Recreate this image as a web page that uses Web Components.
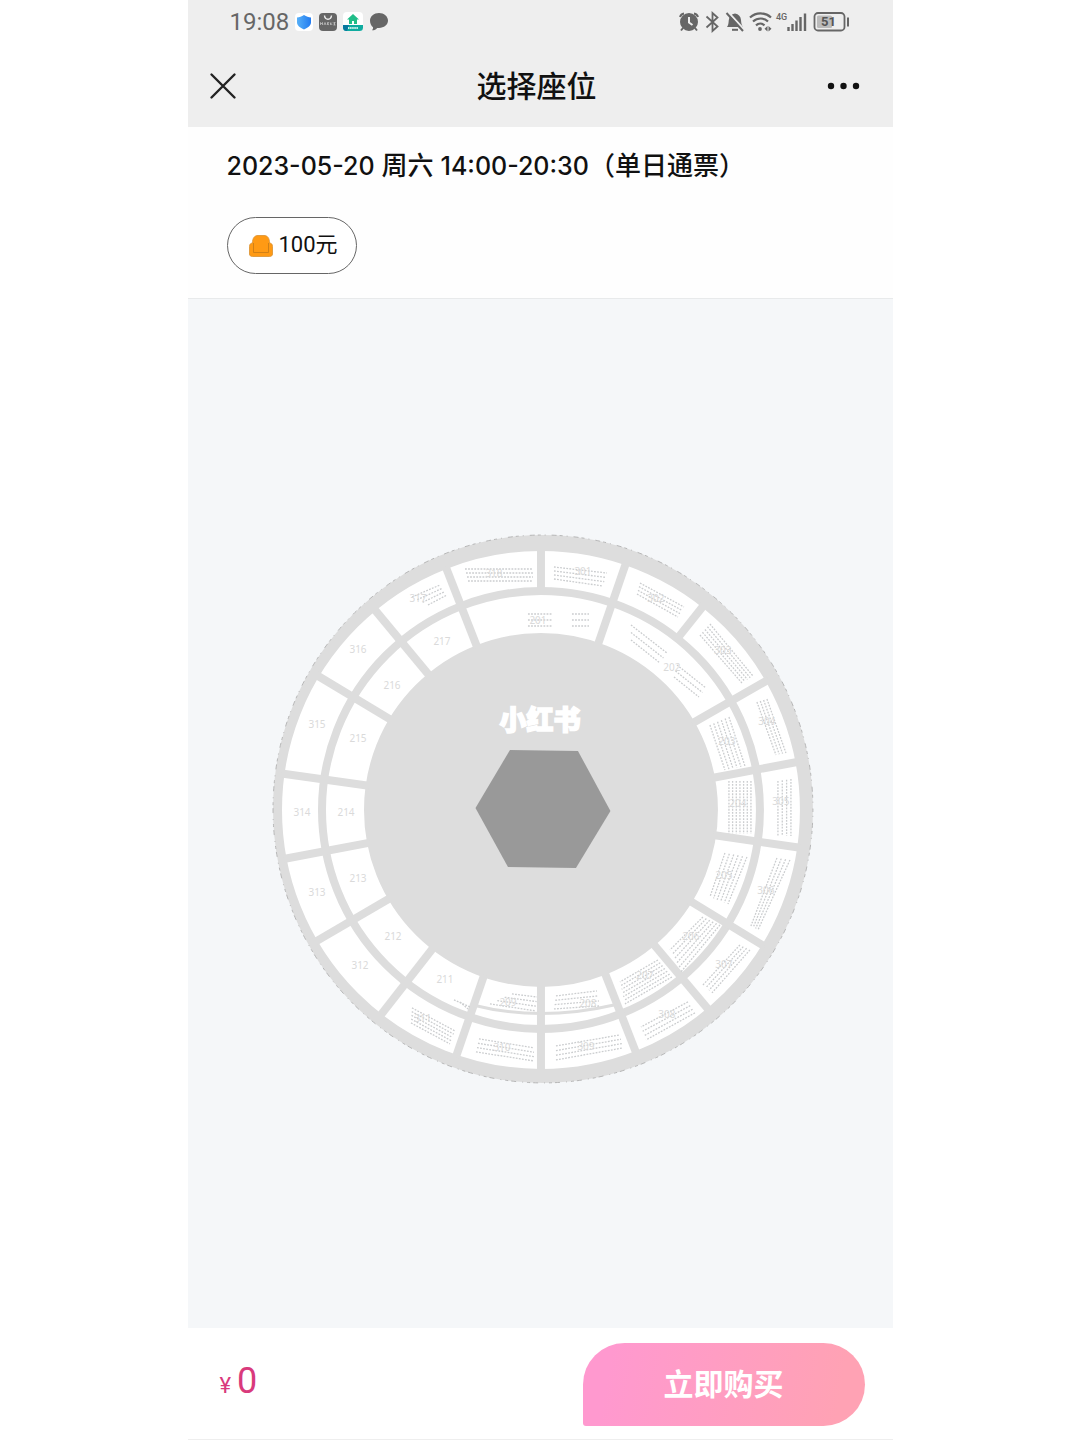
<!DOCTYPE html>
<html lang="zh-CN">
<head>
<meta charset="utf-8">
<meta name="viewport" content="width=device-width, initial-scale=1">
<title>选择座位</title>
<style>
  html, body { margin: 0; background: #fff; }
  body { font-family: Inter, "Noto Sans CJK SC", sans-serif; color: #111; }
</style>
</head>
<body>
<seat-page></seat-page>

<script>
const define = (name, html, ready) => customElements.define(name, class extends HTMLElement {
  connectedCallback() {
    if (this.shadowRoot) return;
    const t = document.createElement('template');
    t.innerHTML = html;
    this.attachShadow({ mode: 'open' }).append(t.content.cloneNode(true));
    if (ready) ready(this, this.shadowRoot);
  }
});

define('status-bar', `
<style>
  :host { display: flex; justify-content: space-between; align-items: center; height: 44px; padding: 0 42px; color: #666; }
  .group { display: flex; align-items: center; gap: 6px; }
  time { font: 24px/44px Roboto, sans-serif; }
  svg { display: block; }
</style>
<div class="group">
  <time>19:08</time>
  <svg width="18" height="18" viewBox="0 0 18 18"><defs><linearGradient id="s"><stop offset="0" stop-color="#56b0f8"/><stop offset="1" stop-color="#227bf0"/></linearGradient></defs><rect width="18" height="18" rx="4" fill="#fff"/><path d="M9 2c2.500 1.800 4.500 2.300 7 2.500v5c0 3-3 5.200-7 7-4-1.800-7-4-7-7v-5C4.500 4.300 6.500 3.800 9 2z" fill="url(#s)"/></svg>
  <svg width="18" height="18" viewBox="0 0 18 18"><rect width="18" height="18" rx="4" fill="#666"/><path d="M5.500 2.500c.5 5 6.500 5 7 0" fill="none" stroke="#eee" stroke-width="1.400"/><path d="M1.500 12V9.500l1 1.500 1-1.500V12M5 12l1-2.500L7 12M8.500 12V9.500h1.200L8.800 11l1.200 1M11.500 9.500V12M13 9.500l-1 1.200 1.200 1.300M14.500 9.500h2M14.500 10.800h1.500M14.500 12h2M15.500 9.500V12" fill="none" stroke="#ccc" stroke-width=".7"/></svg>
  <svg width="20" height="20" viewBox="0 0 20 20"><rect width="20" height="19" rx="4" fill="#fff"/><path d="M10 2l6 5.500h-2V12H6V7.500H4z" fill="#20bd88"/><path d="M9 12V9h2v3z" fill="#fff"/><path d="M0 13h20v2.500a3.500 3.500 0 0 1-3.500 3.500h-13A3.500 3.500 0 0 1 0 15.500z" fill="#0fab9f"/><path d="M0 13h6l-2 6A4 4 0 0 1 0 15.500z" fill="#07779f"/><path d="M5 16h10" stroke="#cff2ec" stroke-width="2" stroke-dasharray="1.500 .6"/></svg>
  <svg width="20" height="18" viewBox="0 0 20 18"><path d="M10 0c5 0 9 3.400 9 7.600S15 15 10 15H8.200C7 16.500 5 17.500 3 17.300c.9-.8 1.200-1.900 1-3C2 12.700 1 10.500 1 7.600 1 3.400 5 0 10 0z" fill="#666"/></svg>
</div>
<svg width="172" height="22" viewBox="679 11 172 22" fill="none" stroke="#666" stroke-width="2" role="img" aria-label="状态图标">
  <circle cx="689" cy="22" r="8" fill="#666"/><path d="M680 17q1-3 4-3.500M698 17q-1-3-4-3.500M683 28l-2 2.500M695 28l2 2.500"/><path d="M689 17v5.500l3.500 2.500" stroke="#eee" stroke-width="2"/>
  <path d="M706.500 16.500l11 10-5 4.500V13l5 4.500-11 10" stroke-width="1.800"/>
  <path d="M727 27c1.500-2 1.500-4 1.800-7 .5-3.500 2.500-6 6.200-6.500 3.700.5 5.700 3 6 6.500.3 3.500.5 5 2 7z" fill="#666" stroke="none"/><path d="M732 29.800h6" stroke-width="2"/><path d="M728.500 12.500l16 17.500" stroke="#eee" stroke-width="2"/><path d="M726.500 13l16.500 18" stroke-width="2"/>
  <path d="M750 17.500c6-5.500 15-5.500 21 0M753 21.500c4.500-4 11-4 15 0M756 25.300c2.500-2.200 6-2.200 8.500 0" stroke-width="2.200"/><circle cx="760" cy="29" r="1.900" fill="#666" stroke="none"/><path d="M767.500 26l-3 2.800 3 2.800zM768.500 26l3 2.800-3 2.800z" fill="#666" stroke="none"/>
  <text x="776" y="20" fill="#666" stroke="none" font-family="Roboto, sans-serif" font-size="9" font-weight="500">4G</text>
  <path d="M788.500 27v4M792.500 24v7M796.500 20.500V31M800.500 17v14M805 13.500V31" stroke-width="2.400"/>
  <rect x="814.500" y="13" width="30" height="17.500" rx="3.500" stroke-width="1.800"/><rect x="817" y="15.500" width="15" height="12.500" rx="1.500" fill="#bbb" stroke="none"/><path d="M848 17.500v9" stroke-width="2"/>
  <text x="821" y="26" fill="#555" stroke="none" font-family="Roboto, sans-serif" font-size="13" font-weight="700">51</text>
</svg>`);

define('nav-bar', `
<style>
  :host { display: grid; grid-template-columns: 1fr auto 1fr; align-items: center; height: 83px; padding: 0 28px 0 21px; }
  h1 { margin: 0; font-size: 30px; line-height: 40px; font-weight: 500; }
  button { border: 0; padding: 0; background: none; color: #111; justify-self: start; }
  button:last-child { justify-self: end; }
  svg { display: block; }
</style>
<button aria-label="关闭"><svg width="28" height="28" viewBox="0 0 28 28"><path d="M2.500 2.500l23 23M25.500 2.500l-23 23" stroke="#222" stroke-width="2.400" stroke-linecap="round"/></svg></button>
<h1><slot></slot></h1>
<button aria-label="更多"><svg width="38" height="8" viewBox="0 0 38 8" fill="#111"><circle cx="4" cy="4" r="3.200"/><circle cx="16.500" cy="4" r="3.200"/><circle cx="29" cy="4" r="3.200"/></svg></button>`);

define('price-chip', `
<style>
  :host { display: block; }
  button { display: flex; align-items: center; gap: 6px; height: 57px; padding: 0 18px 2px 21px; border: 1px solid #666; border-radius: 29px; background: #fff; color: #111; font: 22px/32px Roboto, "Noto Sans CJK SC", sans-serif; }
  svg { display: block; margin-top: 2px; }
</style>
<button><svg width="24" height="24" viewBox="0 0 24 24"><path d="M3.500 9C3.500 4 5.500 1.500 9 1.500h6c3.500 0 5.500 2.500 5.500 7.500 2 0 3 1.500 3 3.500V20c0 1.500-1 2.500-3 2.500h-17c-2 0-3-1-3-2.500v-7.500c0-2 1-3.500 3-3.500z" fill="#ff9a14" stroke="#d99030" stroke-width=".8"/><path d="M4.500 9v9.500h15V9" fill="none" stroke="#c47a16" stroke-width=".8"/></svg><span><slot></slot></span></button>`);

define('session-info', `
<style>
  :host { display: flex; flex-direction: column; align-items: flex-start; gap: 30px; padding: 18px 39px 24px; background: #fefefe; border-bottom: 1px solid #e8eaeb; }
  h2 { margin: 0; font-size: 26px; line-height: 41px; font-weight: 500; white-space: nowrap; }
  .num { font-size: 25px; }
</style>
<h2><span class="num">2023-05-20</span> 周六 <span class="num">14:00-20:30</span>（单日通票）</h2>
<slot></slot>`);

define('seat-map', `
<style>
  :host { display: flex; flex: 1; align-items: center; justify-content: center; background: #f5f7f9; }
  svg { display: block; width: 79%; height: auto; }
  text { font-family: "Noto Sans", sans-serif; font-size: 10px; text-anchor: middle; fill: #dadada; }
  .logo { font: 900 27px "Noto Sans CJK SC", sans-serif; fill: #fff; stroke: #fff; stroke-width: 1.500px; }
</style>
<svg viewBox="262 526 557 575" role="img" aria-label="座位图">
  <ellipse cx="543" cy="809" rx="270" ry="274" fill="#ddd"/>
  <ellipse cx="543" cy="809" rx="270" ry="274" fill="none" stroke="#aaa" stroke-width=".8" stroke-dasharray="3 4 1 6 5 3"/>
  <g fill="none" stroke="#fff">
    <circle cx="541" cy="810" r="241" stroke-width="36"/>
    <circle cx="541" cy="810" r="196" stroke-width="38"/>
  </g>
  <g id="gaps" stroke="#ddd" stroke-width="8"></g>
  <path d="M475 1005.500Q540 1022 614 1005" fill="none" stroke="#ddd" stroke-width="3"/>
  <g id="seats" stroke="#cbcdcf" stroke-width="1.300" stroke-dasharray="1.800 1.300"></g>
  <g id="labels"></g>
  <polygon points="510,750 578,751 610.500,811 576,868 508,867 475.500,808" fill="#999"/>
  <text class="logo" x="540" y="730">小红书</text>
</svg>`, (host, root) => {
  const make = (parent, tag, attrs, text) => {
    const el = document.createElementNS('http://www.w3.org/2000/svg', tag);
    for (const k in attrs) el.setAttribute(k, attrs[k]);
    if (text) el.textContent = text;
    root.getElementById(parent).append(el);
  };
  // Aisles: angle clockwise from the top, then the inner and outer radius.
  const aisles = [[0, 218, 262], [38.5, 218, 262]];
  for (const a of [19, 60.200, 79.400, 98.300, 121.400, 140, 158.600, 180, 199, 218, 239.700, 259.200, 278, 301, 320.300, 338.600]) aisles.push([a, 174, 262]);
  for (const [a, r1, r2] of aisles) {
    const s = Math.sin(a * Math.PI / 180), c = Math.cos(a * Math.PI / 180);
    make('gaps', 'line', { x1: 541 + r1 * s, y1: 810 - r1 * c, x2: 541 + r2 * s, y2: 810 - r2 * c });
  }
  // Seat blocks: first row from-to, last row from-to, number of rows.
  const blocks = [
    [465,569,533,569, 468,581,533,581, 4], [412,597,440,585, 428,605,447,595, 4],
    [528,614,552,614, 528,626,552,626, 3], [572,614,589,614, 572,626,589,626, 3],
    [554,567,607,573, 554,579,603,586, 4], [640,583,684,607, 637,594,678,617, 4],
    [710,624,753,676, 700,635,742,683, 5], [631,625,667,653, 631,640,660,663, 3],
    [677,665,706,688, 674,677,699,697, 3], [767,699,786,753, 757,702,776,755, 4],
    [729,717,745,766, 710,725,725,770, 6], [729,781,729,834, 751,781,751,834, 7],
    [778,781,778,836, 791,779,791,836, 4], [747,857,728,904, 725,853,710,897, 6],
    [790,860,758,930, 777,858,751,926, 4], [720,925,681,972, 703,917,670,950, 6],
    [750,950,712,993, 740,945,703,985, 4], [672,977,625,1004, 658,960,620,982, 7],
    [695,1013,646,1040, 688,1002,641,1027, 4], [556,996,597,991, 554,1009,600,1006, 4],
    [556,1046,620,1035, 556,1060,623,1048, 4], [512,994,537,997, 490,1004,536,1011, 4],
    [479,1039,534,1048, 476,1052,534,1061, 4], [412,1008,455,1031, 411,1023,450,1044, 5],
    [454,1000,470,1007, 460,1002,468,1009, 2]
  ];
  for (const [ax, ay, bx, by, cx, cy, dx, dy, n] of blocks)
    for (let i = 0; i < n; i++) {
      const t = i / (n - 1), mix = (p, q) => p + (q - p) * t;
      make('seats', 'line', { x1: mix(ax, cx), y1: mix(ay, cy), x2: mix(bx, dx), y2: mix(by, dy) });
    }
  const labels = [
    [217,442,645], [216,392,689], [215,358,742], [214,346,816], [213,358,882], [212,393,940], [211,445,983],
    [316,358,653], [315,317,728], [314,302,816], [313,317,896], [312,360,969],
    [318,494,577], [317,418,602], [301,583,575], [302,656,602], [303,723,654], [304,767,725], [305,781,805],
    [306,766,894], [307,724,968], [308,667,1018], [309,586,1050], [310,502,1051], [311,423,1022],
    [201,538,624], [202,672,671], [203,727,745], [204,738,807], [205,724,879], [206,691,940], [207,645,979], [208,588,1007], [209,508,1006]
  ];
  for (const [n, x, y] of labels) make('labels', 'text', { x, y }, String(n));
});

define('buy-bar', `
<style>
  :host { display: flex; align-items: center; justify-content: space-between; height: 111px; padding: 0 28px 0 32px; background: #fff; border-bottom: 1px solid #eee; }
  .price { display: flex; align-items: baseline; gap: 5px; color: #d93a7c; font: 36px/44px Roboto, sans-serif; }
  .price small { font-size: 22px; }
  .price span { margin-left: 1px; }
  button { flex: 0 1 282px; height: 83px; margin-top: 2px; padding: 0 0 6px; border: 0; border-radius: 42px 42px 42px 3px; background: linear-gradient(100deg, #ff99cf 10%, #ffa2b4 90%); color: #fff; font: 700 30px/40px "Noto Sans CJK SC", sans-serif; }
</style>
<div class="price"><small>¥</small><span><slot></slot></span></div>
<button>立即购买</button>`);

define('seat-page', `
<style>
  :host { display: flex; flex-direction: column; box-sizing: border-box; max-width: 705px; min-height: 100vh; margin: 0 auto; }
  header { background: #eee; }
</style>
<header><status-bar></status-bar><nav-bar>选择座位</nav-bar></header>
<session-info><price-chip>100元</price-chip></session-info>
<seat-map></seat-map>
<buy-bar>0</buy-bar>`);
</script>
</body>
</html>
